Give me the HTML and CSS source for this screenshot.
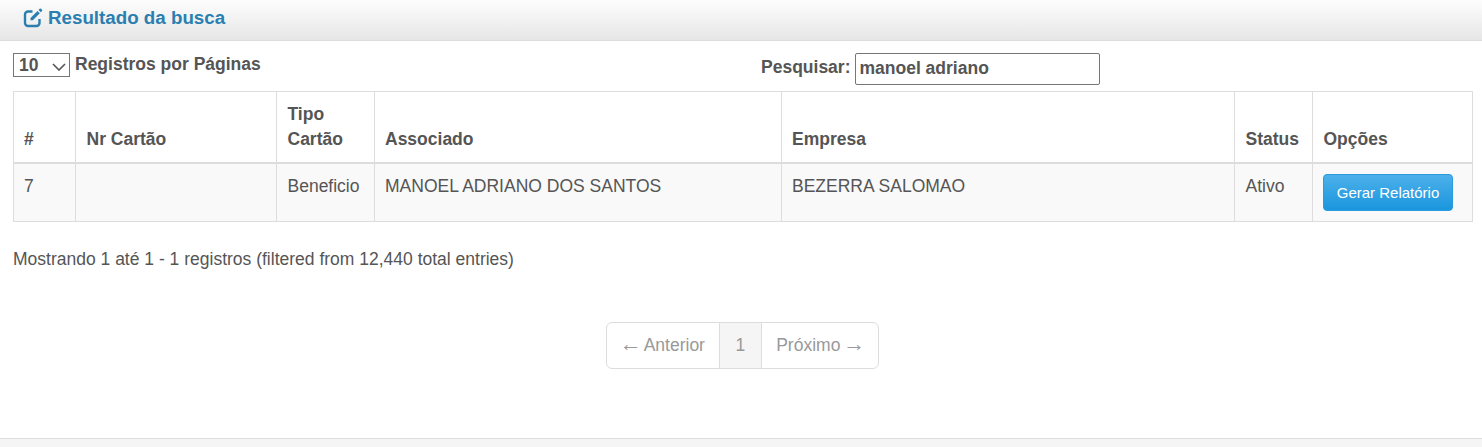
FILE: index.html
```html
<!DOCTYPE html>
<html lang="en">
<head>
    <meta charset="UTF-8">
    <title>Resultado da busca</title>
    <link rel="stylesheet" href="styles.css">
</head>
<body>
    <div class="panel">
        <div class="panel-header">
            <svg class="edit-icon" viewBox="0 0 20 20" width="20" height="20">
                <path d="M9.500 3.500H5A3 3 0 0 0 2 6.500V15a3 3 0 0 0 3 3h8.500a3 3 0 0 0 3-3v-4" fill="none" stroke="#2a7fb0" stroke-width="2.400"/>
                <path d="M7.500 10 14.500 3l2.300 2.300-7 7H7.500z" fill="#2a7fb0"/>
                <path d="M15.500 2 16.700.8a1 1 0 0 1 1.400 0l.9.900a1 1 0 0 1 0 1.400L17.800 4.300z" fill="#2a7fb0"/>
            </svg>
            <h2>Resultado da busca</h2>
        </div>
        <div class="panel-body">
            <div class="controls">
                <div class="length-control">
                    <select class="length-select">
                        <option>10</option>
                    </select>
                    <label>Registros por Páginas</label>
                </div>
                <div class="search-control">
                    <label for="search">Pesquisar:</label>
                    <input type="text" id="search" class="search-input" value="manoel adriano">
                </div>
            </div>
            <table class="results">
                <colgroup>
                    <col class="col-id">
                    <col class="col-card">
                    <col class="col-type">
                    <col class="col-member">
                    <col class="col-company">
                    <col class="col-status">
                    <col class="col-options">
                </colgroup>
                <thead>
                    <tr>
                        <th class="tight">#</th>
                        <th>Nr Cartão</th>
                        <th>Tipo Cartão</th>
                        <th class="tight">Associado</th>
                        <th class="tight">Empresa</th>
                        <th>Status</th>
                        <th>Opções</th>
                    </tr>
                </thead>
                <tbody>
                    <tr>
                        <td class="tight">7</td>
                        <td></td>
                        <td>Beneficio</td>
                        <td class="tight">MANOEL ADRIANO DOS SANTOS</td>
                        <td class="tight">BEZERRA SALOMAO</td>
                        <td>Ativo</td>
                        <td class="tight"><button class="btn-report">Gerar Relatório</button></td>
                    </tr>
                </tbody>
            </table>
            <p class="table-info">Mostrando 1 até 1 - 1 registros (filtered from 12,440 total entries)</p>
            <div class="pager-wrap">
                <ul class="pager">
                    <li class="prev"><span class="arrow">←</span> Anterior</li>
                    <li class="active">1</li>
                    <li class="next">Próximo <span class="arrow">→</span></li>
                </ul>
            </div>
        </div>
    </div>
</body>
</html>
```

FILE: styles.css
```css
* {
    box-sizing: border-box;
}

body {
    font-family: "Liberation Sans", Arial, sans-serif;
    font-size: 17.5px;
    color: #555;
    background-color: #f5f5f5;
    margin: 0;
    padding: 0;
}

.panel {
    background-color: white;
    height: 439px;
    border-bottom: 1px solid #ddd;
}

.panel-header {
    display: flex;
    align-items: center;
    height: 41px;
    padding: 0 0 4px 23px;
    background: linear-gradient(to bottom, #fdfdfd, #e6e6e6);
    border-bottom: 1px solid #ddd;
}

.edit-icon {
    margin-right: 5px;
}

h2 {
    margin: 0;
    font-size: 18.75px;
    font-weight: bold;
    color: #2a7fb0;
}

.panel-body {
    padding: 12px 10px 0 13px;
}

.controls {
    display: flex;
    height: 38px;
}

.length-control {
    display: flex;
    align-items: flex-start;
    width: 748px;
    font-weight: bold;
}

.length-control label {
    margin-left: 5px;
    line-height: 22px;
}

.length-select {
    appearance: none;
    width: 57px;
    height: 24px;
    font-family: "Liberation Sans", Arial, sans-serif;
    font-size: 17.5px;
    font-weight: bold;
    color: #555;
    background: white url("data:image/svg+xml,%3Csvg xmlns='http://www.w3.org/2000/svg' width='14' height='8'%3E%3Cpath d='M1 1l6 6 6-6' fill='none' stroke='%23555' stroke-width='1.600'/%3E%3C/svg%3E") no-repeat 38px 9px;
    border: 1px solid #767676;
    padding-left: 5px;
}

.search-control {
    display: flex;
    align-items: flex-start;
    font-weight: bold;
}

.search-control label {
    margin-right: 5px;
    line-height: 28px;
}

.search-input {
    width: 245px;
    height: 32px;
    font-family: "Liberation Sans", Arial, sans-serif;
    font-size: 17.5px;
    font-weight: bold;
    color: #555;
    border: 1px solid #767676;
    border-radius: 2px;
    padding: 0 3px 2px 3px;
}

.results {
    width: 1459px;
    table-layout: fixed;
    border-collapse: collapse;
    border: 1px solid #ddd;
    line-height: 25px;
}

.col-id { width: 62px; }
.col-card { width: 201px; }
.col-type { width: 98px; }
.col-member { width: 407px; }
.col-company { width: 453px; }
.col-status { width: 78px; }
.col-options { width: 160px; }

th {
    text-align: left;
    vertical-align: bottom;
    padding: 10px 10px 10px 10.500px;
    border: 1px solid #ddd;
    border-bottom: 2px solid #ddd;
}

td {
    vertical-align: top;
    height: 58px;
    padding: 10px 10px 8px 10.500px;
    background-color: #f9f9f9;
    border: 1px solid #ddd;
}

th.tight,
td.tight {
    padding-left: 10px;
}

.btn-report {
    display: block;
    width: 130px;
    height: 37px;
    font-family: "Liberation Sans", Arial, sans-serif;
    font-size: 15px;
    color: white;
    background: linear-gradient(to bottom, #4db0ea, #1a96dd);
    border: 1px solid #2a9bdc;
    border-radius: 4px;
    padding: 0;
}

.table-info {
    margin: 27px 0 0 0;
    line-height: 20px;
}

.pager-wrap {
    display: flex;
    justify-content: center;
    margin-top: 53px;
}

.pager {
    display: flex;
    list-style: none;
    margin: 0;
    padding: 0;
    height: 47px;
    line-height: 45px;
    color: #999;
    border: 1px solid #ddd;
    border-radius: 6px;
    overflow: hidden;
}

.pager li {
    padding: 0 15px;
    border-left: 1px solid #ddd;
}

.pager .prev {
    padding-right: 14px;
    border-left: none;
}

.pager .next {
    padding: 0 15px 0 14.500px;
}

.pager .active {
    padding: 0 15.500px;
    background-color: #f5f5f5;
}

.arrow {
    display: inline-block;
    font-size: 22px;
    line-height: 1;
    margin: 0 -2px;
}
```
